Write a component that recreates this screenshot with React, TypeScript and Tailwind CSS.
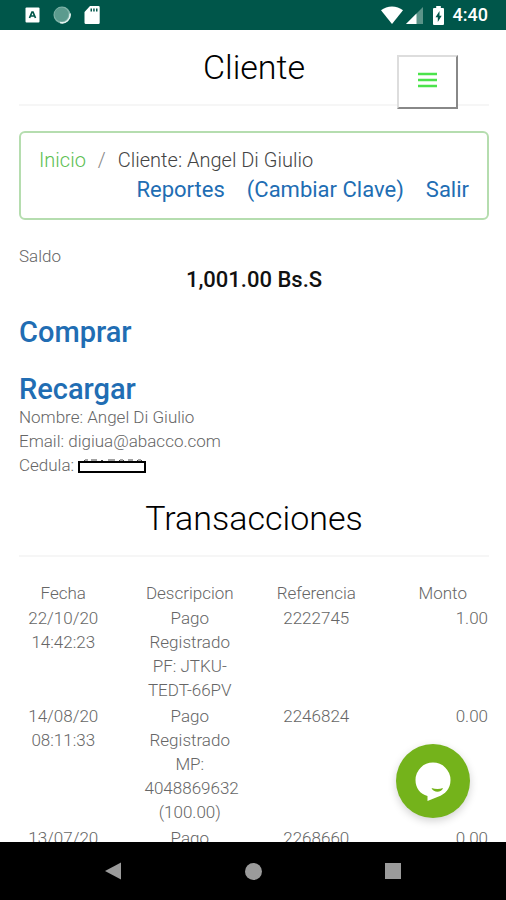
import React from "react";

type Transaction = {
  date: string;
  time: string;
  description: string;
  reference: string;
  amount: string;
};

const transactions: Transaction[] = [
  { date: "22/10/20", time: "14:42:23", description: "Pago Registrado PF: JTKU-TEDT-66PV", reference: "2222745", amount: "1.00" },
  { date: "14/08/20", time: "08:11:33", description: "Pago Registrado MP: 4048869632 (100.00)", reference: "2246824", amount: "0.00" },
  { date: "13/07/20", time: "", description: "Pago", reference: "2268660", amount: "0.00" },
];

function StatusBar() {
  return (
    <header className="flex h-[30px] shrink-0 items-center justify-between bg-[#00564a] pr-[18px] pl-[25px] text-white">
      <div className="flex items-center gap-[13px]">
        <svg className="h-4 w-[15px]" viewBox="0 0 15 16" aria-hidden="true">
          <rect x="0.5" y="0.5" width="14" height="15" rx="1" fill="#fff" />
          <path d="M4.5 11 7 5h1l2.5 6M5.5 9h4" fill="none" stroke="#00564a" strokeWidth="1.7" />
        </svg>
        <svg className="h-[18px] w-[18px]" viewBox="0 0 18 18" aria-hidden="true">
          <circle cx="9" cy="9" r="8.5" fill="#7fb3a8" />
          <path d="M17 7.500a8 8 0 0 1-10 9" fill="none" stroke="#e6f3f0" strokeWidth="1.6" />
          <circle cx="8.5" cy="8.5" r="7" fill="#5b9b8e" />
        </svg>
        <svg className="h-5 w-4" viewBox="0 0 16 20" aria-hidden="true">
          <path d="M6 1h8.5a1.2 1.2 0 0 1 1.2 1.2v15.6a1.2 1.2 0 0 1-1.2 1.2h-13A1.2 1.2 0 0 1 .5 17.800V7z" fill="#fff" />
          <path d="M6.500 3.500h1.500v3H6.500zM9.200 3.500h1.500v3H9.200zM12 3.500h1.500v3H12z" fill="#00564a" />
        </svg>
      </div>
      <div className="flex items-center">
        <svg className="h-[18px] w-[22px]" viewBox="0 0 22 18" aria-hidden="true">
          <path d="M11 18 0 4.300C6-.9 16-.9 22 4.300z" fill="#fff" />
        </svg>
        <svg className="ml-[3px] h-[17px] w-[17px]" viewBox="0 0 17 17" aria-hidden="true">
          <path d="M17 0v17H0z" fill="#5b9489" />
          <path d="M10.500 6.500V17H0z" fill="#fff" />
        </svg>
        <svg className="mr-[9px] ml-[10px] h-[19px] w-[11px]" viewBox="0 0 11 19" aria-hidden="true">
          <path d="M3.200 0h4.600v2H10a1 1 0 0 1 1 1v15a1 1 0 0 1-1 1H1a1 1 0 0 1-1-1V3a1 1 0 0 1 1-1h2.200z" fill="#fff" />
          <path d="M6.500 5 2.500 11.200h2.300V16l3.900-6.300H6.500z" fill="#00564a" />
        </svg>
        <span className="text-[18px] leading-5 font-medium">4:40</span>
      </div>
    </header>
  );
}

function RedactedValue() {
  return (
    <svg className="inline-block h-[14px] w-[68px] align-[-2px]" viewBox="0 0 68 14" role="img" aria-label="Oculto">
      <path d="M5 3l2-2h3M13 1h6M22 3l2-2 2 2M30 1h7M40 3l2-2h3l2 2M50 1h5M58 3l2-2h3l2 2" fill="none" stroke="#444" strokeWidth="1" />
      <rect x="1" y="3" width="66" height="10" fill="#fff" stroke="#000" strokeWidth="2" />
    </svg>
  );
}

function NavigationBar() {
  return (
    <nav aria-label="Sistema" className="flex h-[58px] shrink-0 items-center justify-center gap-[106px] bg-black">
      <button type="button" aria-label="Atrás" className="flex w-[34px] justify-center">
        <svg className="h-[18px] w-4" viewBox="0 0 16 18" aria-hidden="true">
          <path d="M16 .5v17L0 9z" fill="#9b9b9b" />
        </svg>
      </button>
      <button type="button" aria-label="Inicio del sistema" className="flex w-[34px] justify-center">
        <span className="h-[17px] w-[17px] rounded-full bg-[#9b9b9b]" />
      </button>
      <button type="button" aria-label="Recientes" className="flex w-[34px] justify-center">
        <span className="h-4 w-4 bg-[#9b9b9b]" />
      </button>
    </nav>
  );
}

export default function App() {
  return (
    <div className="flex h-screen flex-col bg-white font-['Roboto',sans-serif] text-[17px] leading-6 font-light text-[#666]">
      <StatusBar />
      <main className="relative min-h-0 flex-1 overflow-hidden">
        <div className="pr-[17px] pl-[19px]">
          <h1 className="border-b-2 border-[#f6f6f6] pt-[17px] pb-[17px] text-center text-[34px] leading-10 font-light text-black">
            Cliente
          </h1>
          <section className="mt-[25px] rounded-[6px] border-2 border-[#b5ddaf] px-[18px] pt-3 pb-[13px]">
            <div className="flex items-center text-[20px] leading-[30px] text-[#444]">
              <a href="#inicio" className="text-[#5cc052]">Inicio</a>
              <span className="mx-3 text-[#888]">/</span>
              <span>Cliente: Angel Di Giulio</span>
            </div>
            <div className="flex justify-end gap-[22px] text-[22px] leading-[30px] font-normal text-[#216db3]">
              <a href="#reportes">Reportes</a>
              <a href="#clave">(Cambiar Clave)</a>
              <a href="#salir">Salir</a>
            </div>
          </section>
          <p className="mt-6">Saldo</p>
          <p className="text-center text-[22px] font-medium text-[#111]">1,001.00 Bs.S</p>
          <p className="mt-6 text-[29px] leading-8 font-medium text-[#216db3]">
            <a href="#comprar">Comprar</a>
          </p>
          <p className="mt-[25px] text-[29px] leading-8 font-medium text-[#216db3]">
            <a href="#recargar">Recargar</a>
          </p>
          <div>
            <p>Nombre: Angel Di Giulio</p>
            <p>Email: digiua@abacco.com</p>
            <p>Cedula: <RedactedValue /></p>
          </div>
          <h2 className="mt-[21px] border-b-2 border-[#f6f6f6] pb-[17px] text-center text-[34px] leading-10 font-light text-black">
            Transacciones
          </h2>
        </div>
        <table className="mt-6 w-full table-fixed text-center">
          <thead>
            <tr>
              <th className="px-[18px] pb-px font-light">Fecha</th>
              <th className="pb-px font-light">Descripcion</th>
              <th className="px-[18px] pb-px font-light">Referencia</th>
              <th className="px-[18px] pb-px font-light">Monto</th>
            </tr>
          </thead>
          <tbody>
            {transactions.map((item) => (
              <tr key={item.reference} className="align-top">
                <td className="px-[18px] pb-[2px]">{item.date} {item.time}</td>
                <td className="px-[18px] pb-[2px]">{item.description}</td>
                <td className="px-[18px] pb-[2px]">{item.reference}</td>
                <td className="px-[18px] pb-[2px] text-right">{item.amount}</td>
              </tr>
            ))}
          </tbody>
        </table>
        <button
          type="button"
          aria-label="Menú"
          className="absolute top-[25px] right-12 flex h-[54px] w-[61px] items-center justify-center border-2 border-t-[#ddd] border-r-[#888] border-b-[#888] border-l-[#ddd] bg-white pb-1"
        >
          <svg className="h-4 w-[19px]" viewBox="0 0 19 16" aria-hidden="true">
            <path d="M0 2h19M0 8h19M0 14h19" stroke="#4be34b" strokeWidth="2.600" />
          </svg>
        </button>
        <button
          type="button"
          aria-label="Abrir chat"
          className="absolute right-9 bottom-6 h-[74px] w-[74px] rounded-full bg-[#74b31b] shadow-[0_3px_8px_rgba(0,0,0,0.18)]"
        >
          <svg className="h-full w-full" viewBox="0 0 74 74" aria-hidden="true">
            <path d="M37 18.500a17.500 17.500 0 0 1 17.500 17.500c0 9-5.500 14-12.500 16.800L31.500 57V52C24 50 19.500 44 19.500 36A17.500 17.500 0 0 1 37 18.500z" fill="#fff" />
            <path d="M35.500 44c4 1.200 8 1.200 11.500 0-1.500 5-9.500 5-11.500 0z" fill="#74b31b" />
          </svg>
        </button>
      </main>
      <NavigationBar />
    </div>
  );
}
